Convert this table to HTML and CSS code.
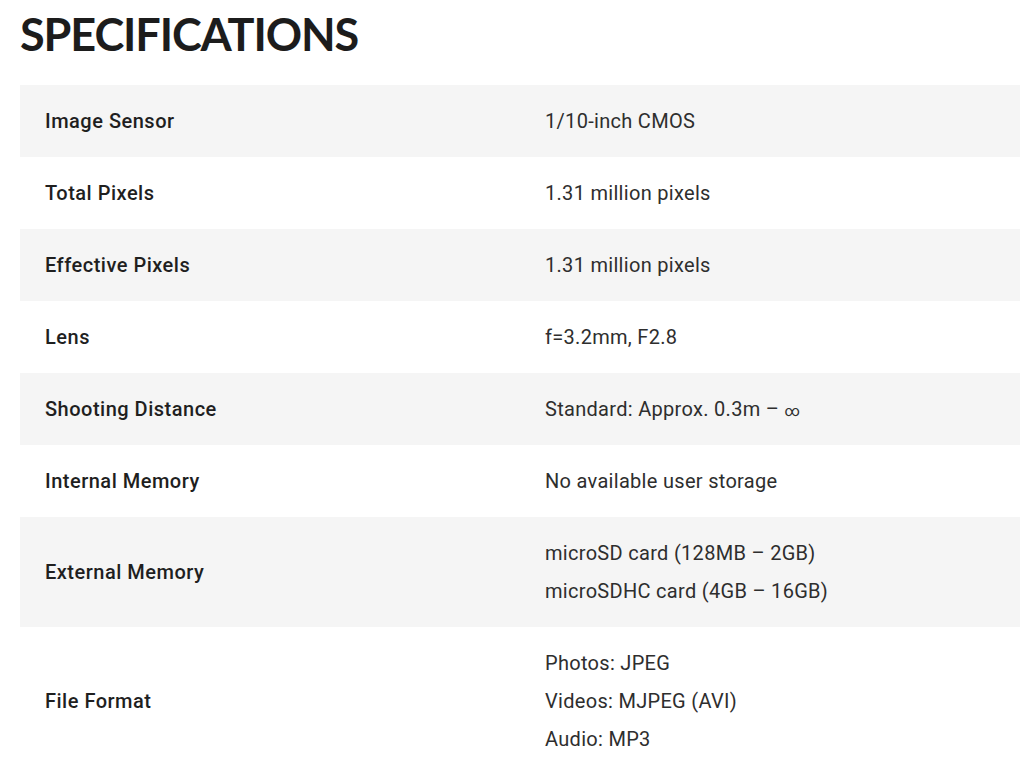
FILE: index.html
```html
<!DOCTYPE html>
<html>
<head>
<meta charset="utf-8">
<link rel="stylesheet" href="styles.css">
</head>
<body>
<main class="specs">
  <h2 class="specs-title">SPECIFICATIONS</h2>
  <table class="spec-table">
    <tbody>
      <tr><th>Image Sensor</th><td>1/10-inch CMOS</td></tr>
      <tr><th>Total Pixels</th><td>1.31 million pixels</td></tr>
      <tr><th>Effective Pixels</th><td>1.31 million pixels</td></tr>
      <tr><th>Lens</th><td>f=3.2mm, F2.8</td></tr>
      <tr><th>Shooting Distance</th><td>Standard: Approx. 0.3m – <span class="inf">∞</span></td></tr>
      <tr><th>Internal Memory</th><td>No available user storage</td></tr>
      <tr><th>External Memory</th><td>microSD card (128MB – 2GB)<br>microSDHC card (4GB – 16GB)</td></tr>
      <tr><th>File Format</th><td>Photos: JPEG<br>Videos: MJPEG (AVI)<br>Audio: MP3</td></tr>
    </tbody>
  </table>
</main>
</body>
</html>
```
FILE: styles.css
```css
html, body {
  margin: 0;
  padding: 0;
  background: #ffffff;
}
body {
  font-family: Roboto, "Liberation Sans", sans-serif;
  color: #222222;
}
.specs {
  padding: 0 5px 0 20px;
}
.specs-title {
  margin: 0;
  padding-top: 9px;
  height: 85px;
  box-sizing: border-box;
  font-family: Lato, Roboto, sans-serif;
  font-size: 45px;
  line-height: 50px;
  font-weight: 700;
  color: #1c1c1c;
  letter-spacing: -1.1px;
}
.spec-table {
  width: 1000px;
  border-collapse: collapse;
  table-layout: fixed;
}
.spec-table tr:nth-child(odd) {
  background: #f5f5f5;
}
.spec-table th,
.spec-table td {
  width: 50%;
  height: 38px;
  text-align: left;
  vertical-align: middle;
  padding: 17px 25px;
  font-size: 20px;
  line-height: 38px;
}
.spec-table th {
  font-weight: 500;
  letter-spacing: 0.5px;
  color: #1f1f1f;
}
.spec-table td {
  font-weight: 400;
  letter-spacing: 0.3px;
  color: #2e2e2e;
}
.inf {
  font-size: 15px;
  line-height: 1;
}
```
